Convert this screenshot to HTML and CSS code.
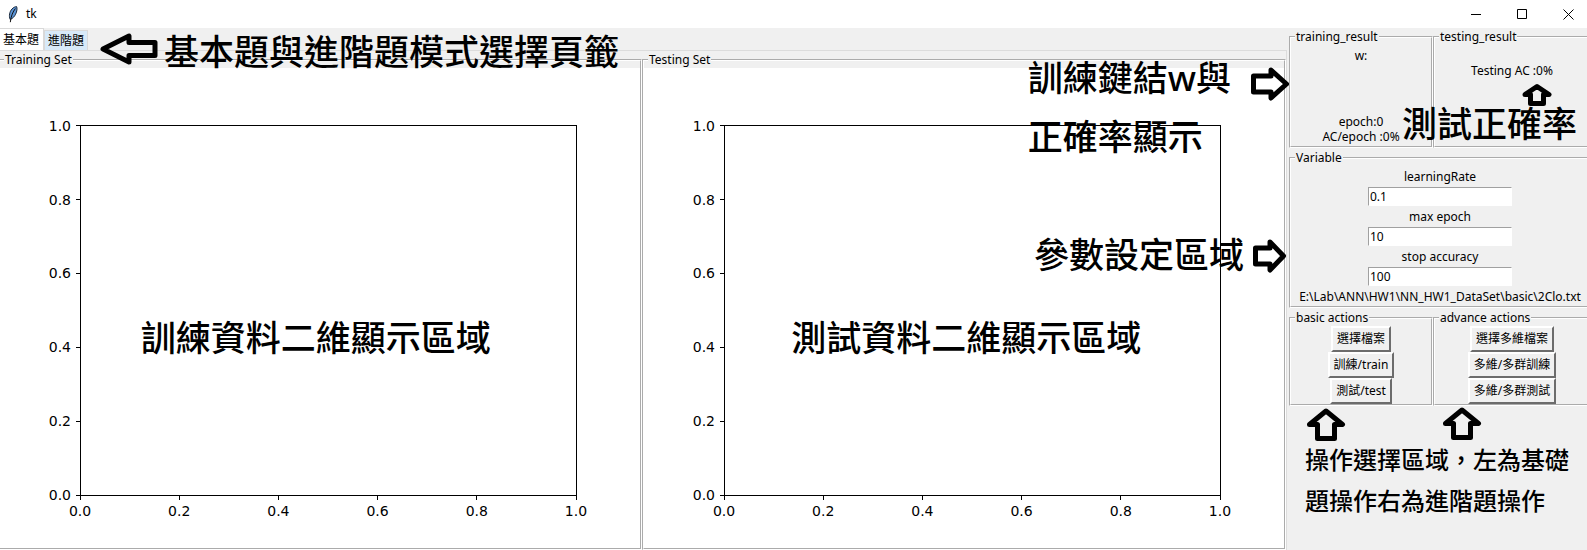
FILE: index.html
```html
<!DOCTYPE html>
<html lang="zh-Hant">
<head>
<meta charset="utf-8">
<title>tk</title>
<link rel="stylesheet" href="styles.css">
</head>
<body>
<header class="titlebar">
  <svg class="feather" viewBox="0 0 10 17" aria-hidden="true">
    <path d="M2.2 13.5C.6 10 1.6 5.500 4 3 5.500 1.300 7.400.6 8.600.6c.8 1.600.4 4.800-1 7.600-1 2.200-2.800 4.200-5.400 5.300z" fill="#5b94d6" stroke="#1c2a3c"/>
    <path d="M7.400 2.500C5 5.500 3 10 2.300 16.200" fill="none" stroke="#111"/>
  </svg>
  <h1 class="title">tk</h1>
  <div class="controls">
    <button type="button" aria-label="最小化"><svg viewBox="0 0 11 11"><path d="M0 5.500h10"/></svg></button>
    <button type="button" aria-label="最大化"><svg viewBox="0 0 11 11"><path d="M.5.5h9v9h-9z"/></svg></button>
    <button type="button" aria-label="關閉"><svg viewBox="0 0 11 11"><path d="M.5.5l10 10M10.500.5l-10 10"/></svg></button>
  </div>
</header>

<div class="app">
  <main class="notebook">
    <div class="tabs" role="tablist">
      <button type="button" class="tab selected" role="tab" aria-selected="true">基本題</button>
      <button type="button" class="tab hover" role="tab" aria-selected="false">進階題</button>
    </div>
    <div class="pane">
      <fieldset class="group plot">
        <legend>Training Set</legend>
        <svg class="chart" role="img" aria-label="Training Set">
          <rect x="12.500%" y="12%" width="77.500%" height="77%"/>
          <svg class="overflow" x="12.500%" y="12%" width="77.500%" height="77%">
            <g class="y">
              <line x1="-4" x2="0" y1="0" y2="0"/><text x="-9" y="0" dy="5">1.0</text>
              <line x1="-4" x2="0" y1="20%" y2="20%"/><text x="-9" y="20%" dy="5">0.8</text>
              <line x1="-4" x2="0" y1="40%" y2="40%"/><text x="-9" y="40%" dy="5">0.6</text>
              <line x1="-4" x2="0" y1="60%" y2="60%"/><text x="-9" y="60%" dy="5">0.4</text>
              <line x1="-4" x2="0" y1="80%" y2="80%"/><text x="-9" y="80%" dy="5">0.2</text>
              <line x1="-4" x2="0" y1="100%" y2="100%"/><text x="-9" y="100%" dy="5">0.0</text>
            </g>
            <svg class="overflow x" y="100%">
              <line x1="0" x2="0" y1="0" y2="5"/><text x="0" y="21">0.0</text>
              <line x1="20%" x2="20%" y1="0" y2="5"/><text x="20%" y="21">0.2</text>
              <line x1="40%" x2="40%" y1="0" y2="5"/><text x="40%" y="21">0.4</text>
              <line x1="60%" x2="60%" y1="0" y2="5"/><text x="60%" y="21">0.6</text>
              <line x1="80%" x2="80%" y1="0" y2="5"/><text x="80%" y="21">0.8</text>
              <line x1="100%" x2="100%" y1="0" y2="5"/><text x="100%" y="21">1.0</text>
            </svg>
          </svg>
        </svg>
        <p class="note note-train">訓練資料二維顯示區域</p>
      </fieldset>
      <fieldset class="group plot">
        <legend>Testing Set</legend>
        <svg class="chart" role="img" aria-label="Testing Set">
          <rect x="12.500%" y="12%" width="77.500%" height="77%"/>
          <svg class="overflow" x="12.500%" y="12%" width="77.500%" height="77%">
            <g class="y">
              <line x1="-4" x2="0" y1="0" y2="0"/><text x="-9" y="0" dy="5">1.0</text>
              <line x1="-4" x2="0" y1="20%" y2="20%"/><text x="-9" y="20%" dy="5">0.8</text>
              <line x1="-4" x2="0" y1="40%" y2="40%"/><text x="-9" y="40%" dy="5">0.6</text>
              <line x1="-4" x2="0" y1="60%" y2="60%"/><text x="-9" y="60%" dy="5">0.4</text>
              <line x1="-4" x2="0" y1="80%" y2="80%"/><text x="-9" y="80%" dy="5">0.2</text>
              <line x1="-4" x2="0" y1="100%" y2="100%"/><text x="-9" y="100%" dy="5">0.0</text>
            </g>
            <svg class="overflow x" y="100%">
              <line x1="0" x2="0" y1="0" y2="5"/><text x="0" y="21">0.0</text>
              <line x1="20%" x2="20%" y1="0" y2="5"/><text x="20%" y="21">0.2</text>
              <line x1="40%" x2="40%" y1="0" y2="5"/><text x="40%" y="21">0.4</text>
              <line x1="60%" x2="60%" y1="0" y2="5"/><text x="60%" y="21">0.6</text>
              <line x1="80%" x2="80%" y1="0" y2="5"/><text x="80%" y="21">0.8</text>
              <line x1="100%" x2="100%" y1="0" y2="5"/><text x="100%" y="21">1.0</text>
            </svg>
          </svg>
        </svg>
        <p class="note note-test">測試資料二維顯示區域</p>
      </fieldset>
    </div>

    <svg class="arrow arrow-tabs" viewBox="0 0 58 32"><path d="M3 16L29 3v6.500h26v13H29V29z"/></svg>
    <p class="note note-tabs">基本題與進階題模式選擇頁籤</p>
    <p class="note note-weights">訓練鍵結w與<br>正確率顯示</p>
    <svg class="arrow arrow-weights" viewBox="0 0 38 36"><path d="M2.500 10H20V4l15.500 14L20 32v-6H2.500z"/></svg>
    <p class="note note-params">參數設定區域</p>
    <svg class="arrow arrow-params" viewBox="0 0 38 36"><path d="M6.500 10H21V4l13.500 14L21 32v-6H6.500z"/></svg>
  </main>

  <aside class="sidebar">
    <fieldset class="group training">
      <legend>training_result</legend>
      <p>w:</p>
      <p class="push">epoch:0</p>
      <p>AC/epoch :0%</p>
    </fieldset>
    <fieldset class="group testing">
      <legend>testing_result</legend>
      <p>Testing AC :0%</p>
    </fieldset>
    <fieldset class="group variable">
      <legend>Variable</legend>
      <label for="rate">learningRate</label>
      <input id="rate" type="text" value="0.1">
      <label for="epoch">max epoch</label>
      <input id="epoch" type="text" value="10">
      <label for="accuracy">stop accuracy</label>
      <input id="accuracy" type="text" value="100">
      <p class="path">E:\Lab\ANN\HW1\NN_HW1_DataSet\basic\2Clo.txt</p>
    </fieldset>
    <fieldset class="group actions">
      <legend>basic actions</legend>
      <button type="button">選擇檔案</button>
      <button type="button">訓練/train</button>
      <button type="button">測試/test</button>
    </fieldset>
    <fieldset class="group actions">
      <legend>advance actions</legend>
      <button type="button">選擇多維檔案</button>
      <button type="button">多維/多群訓練</button>
      <button type="button">多維/多群測試</button>
    </fieldset>

    <svg class="arrow arrow-accuracy" viewBox="0 0 32 24"><path d="M16 3.500L28 11.500H22.500V20.500H9.500V11.500H4z"/></svg>
    <p class="note note-accuracy">測試正確率</p>
    <svg class="arrow arrow-basic" viewBox="0 0 40 34"><path d="M20 3L36.500 16.500H28.500V30.500H11.500V16.500H3.500z"/></svg>
    <svg class="arrow arrow-advance" viewBox="0 0 40 34"><path d="M20 3L36.500 16.500H28.500V30.500H11.500V16.500H3.500z"/></svg>
    <p class="note note-actions">操作選擇區域，左為基礎<br>題操作右為進階題操作</p>
  </aside>
</div>
</body>
</html>
```
FILE: styles.css
```css
* {
  box-sizing: border-box;
}

body {
  margin: 0;
  min-height: 100vh;
  display: flex;
  flex-direction: column;
  overflow: hidden;
  background: #f0f0f0;
  color: #000;
  font: 12px/16px "Noto Sans", "Noto Sans CJK TC", sans-serif;
}

p {
  margin: 0;
}

button,
input {
  font: inherit;
  color: inherit;
}

/* Title bar */
.titlebar {
  display: flex;
  align-items: center;
  height: 28px;
  padding-left: 8px;
  background: #fff;
}

.feather {
  width: 10px;
  height: 17px;
}

.title {
  margin: 0 auto 0 8px;
  font-size: 12px;
  font-weight: 400;
}

.controls {
  display: flex;
  margin-right: -4px;
}

.controls button {
  display: flex;
  align-items: center;
  justify-content: center;
  width: 46px;
  height: 24px;
  padding: 0;
  border: 0;
  background: none;
}

.controls svg {
  width: 11px;
  height: 11px;
  fill: none;
  stroke: #000;
}

/* Layout */
.app {
  flex: 1;
  display: flex;
}

.notebook {
  position: relative;
  flex: 1;
  display: flex;
  flex-direction: column;
}

.tabs {
  display: flex;
  align-items: flex-end;
  height: 22px;
}

.tab {
  height: 20px;
  padding: 0 3px;
  border: 1px solid #d9d9d9;
  border-bottom: 0;
  background: #f0f0f0;
  line-height: 20px;
}

.tab.selected {
  height: 22px;
  padding: 0 4px 0 3px;
  border-left: 0;
  background: #fff;
}

.tab.hover {
  background: #d8eaf9;
}

.pane {
  flex: 1;
  display: flex;
  margin-left: -2px;
  padding-top: 1px;
  border-top: 1px solid #dcdcdc;
  border-right: 1px solid #dcdcdc;
}

/* Labelled frames */
.group {
  min-width: 0;
  margin: 0;
  padding: 0;
  border: 2px groove #fff;
}

.group legend {
  height: 16px;
  margin-left: 4px;
  padding: 0 1px;
  text-align: left;
}

.plot {
  position: relative;
  flex: 1;
}

.chart {
  display: block;
  width: 100%;
  height: 100%;
  min-height: 480px;
  background: #fff;
}

.chart rect,
.chart line {
  fill: none;
  stroke: #000;
  shape-rendering: crispEdges;
}

.chart text {
  font: 14px "DejaVu Sans", sans-serif;
}

.chart .y text {
  text-anchor: end;
}

.chart .x text {
  text-anchor: middle;
}

.overflow {
  overflow: visible;
}

/* Sidebar */
.sidebar {
  position: relative;
  width: 304px;
  margin-right: -4px;
  padding: 1px 0 0 2px;
  display: grid;
  grid-template-columns: 144px 1fr;
  align-content: start;
  row-gap: 2px;
}

.group p,
.group label {
  text-align: center;
}

.training,
.testing {
  display: flex;
  flex-direction: column;
  height: 119px;
}

.training {
  padding: 3px 0 2px;
  line-height: 15px;
}

.push {
  margin-top: auto;
}

.testing {
  padding-top: 18px;
}

.variable {
  grid-column: 1 / -1;
}

.variable label {
  display: block;
  height: 21px;
  line-height: 21px;
}

.variable input {
  display: block;
  width: 144px;
  height: 19px;
  margin: 0 auto;
  padding: 0 1px;
  border: 1px solid #fff;
  border-top-color: #a0a0a0;
  border-left-color: #a0a0a0;
  background: #fff;
}

.path {
  height: 20px;
  line-height: 21px;
  white-space: nowrap;
}

.actions button {
  display: block;
  height: 26px;
  margin: 0 auto;
  padding: 0 4px;
  border: 2px solid;
  border-color: #fff #6c6c6c #6c6c6c #fff;
  background: #f0f0f0;
}

/* Annotations drawn over the window */
.group .note,
.note {
  position: absolute;
  font: 500 35px/59px "Noto Sans", "Noto Sans CJK TC", sans-serif;
  text-align: left;
  white-space: nowrap;
}

.arrow {
  position: absolute;
  fill: none;
  stroke: #000;
  stroke-width: 5;
  stroke-linejoin: round;
}

.note-tabs {
  left: 164px;
  top: -6px;
}

.arrow-tabs {
  left: 100px;
  top: 5px;
  width: 58px;
}

.note-train {
  left: 22%;
  top: 50%;
}

.note-test {
  left: 23%;
  top: 50%;
}

.note-weights {
  right: 56px;
  top: 20px;
}

.arrow-weights {
  right: -2px;
  top: 38px;
  width: 38px;
}

.note-params {
  right: 43px;
  top: 197px;
}

.arrow-params {
  right: 0;
  top: 210px;
  width: 38px;
}

.arrow-accuracy {
  left: 234px;
  top: 55px;
  width: 32px;
}

.note-accuracy {
  left: 115px;
  top: 66px;
}

.arrow-basic {
  left: 19px;
  top: 380px;
  width: 40px;
}

.arrow-advance {
  left: 155px;
  top: 379px;
  width: 40px;
}

.sidebar .note-actions {
  left: 18px;
  top: 411px;
  font-size: 24px;
  line-height: 41px;
}
```
